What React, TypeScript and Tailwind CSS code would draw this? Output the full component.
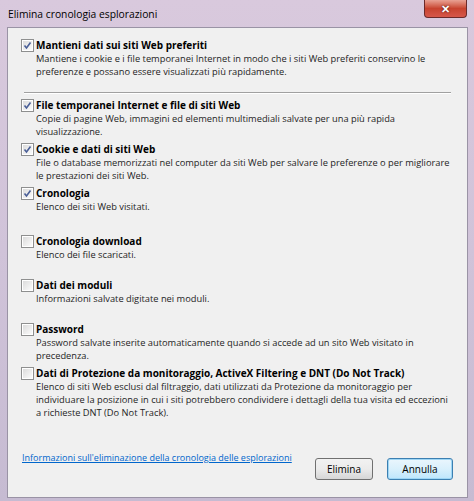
import React from 'react';

interface Item {
  title: string;
  desc: string[];
  checked: boolean;
  extra?: string;
}

const items: Item[] = [
  {
    title: 'File temporanei Internet e file di siti Web',
    desc: ['Copie di pagine Web, immagini ed elementi multimediali salvate per una più rapida', 'visualizzazione.'],
    checked: true,
  },
  {
    title: 'Cookie e dati di siti Web',
    desc: ['File o database memorizzati nel computer da siti Web per salvare le preferenze o per migliorare', 'le prestazioni dei siti Web.'],
    checked: true,
  },
  {
    title: 'Cronologia',
    desc: ['Elenco dei siti Web visitati.'],
    checked: true,
    extra: 'h-[48px]',
  },
  { title: 'Cronologia download', desc: ['Elenco dei file scaricati.'], checked: false },
  { title: 'Dati dei moduli', desc: ['Informazioni salvate digitate nei moduli.'], checked: false },
  {
    title: 'Password',
    desc: ['Password salvate inserite automaticamente quando si accede ad un sito Web visitato in', 'precedenza.'],
    checked: false,
  },
  {
    title: 'Dati di Protezione da monitoraggio, ActiveX Filtering e DNT (Do Not Track)',
    desc: [
      'Elenco di siti Web esclusi dal filtraggio, dati utilizzati da Protezione da monitoraggio per',
      'individuare la posizione in cui i siti potrebbero condividere i dettagli della tua visita ed eccezioni',
      'a richieste DNT (Do Not Track).',
    ],
    checked: false,
  },
];

function Check({ checked }: { checked: boolean }) {
  return (
    <div className="w-[13px] h-[13px] shrink-0 border border-[#8e8f8f] bg-white p-px">
      <div className="w-full h-full bg-gradient-to-br from-[#dcdcdc] to-[#fbfbfb] flex items-center justify-center">
        {checked && (
          <svg width="9" height="9" viewBox="0 0 9 9">
            <path d="M1.5 4.5 L3.5 7 L7.5 1.5" stroke="#4a5f97" strokeWidth="1.6" fill="none" />
          </svg>
        )}
      </div>
    </div>
  );
}

function Row({ item }: { item: Item }) {
  return (
    <div className={`flex gap-[2px] ${item.extra ?? 'h-[44px]'}`}>
      <div className="pt-[1px]">
        <Check checked={item.checked} />
      </div>
      <div>
        <div className="font-bold text-[10px] leading-[14px] text-black whitespace-nowrap">{item.title}</div>
        {item.desc.map((d, i) => (
          <div key={i} className="text-[9.3px] leading-[13px] text-[#1e1e1e] whitespace-nowrap">{d}</div>
        ))}
      </div>
    </div>
  );
}

export default function App() {
  return (
    <div
      className="w-[474px] h-[501px] bg-gradient-to-b from-[#d9c9dd] via-[#d0c3d9] to-[#c6bbd2] relative overflow-hidden"
      style={{ fontFamily: '"Open Sans", "Noto Sans", sans-serif' }}
    >
      <div className="absolute right-[7px] top-0 w-[43px] h-[18px] rounded-b-[4px] border border-t-0 border-[#6b2a2a] bg-gradient-to-b from-[#e8a193] via-[#c7432f] to-[#d6574a] flex items-center justify-center">
        <span className="text-white font-bold text-[11px] leading-none" style={{ textShadow: '0 0 2px #3a0000' }}>✕</span>
      </div>
      <div className="h-[27px] pl-[8px] pt-[6px] text-[10.3px] leading-[16px] text-black">Elimina cronologia esplorazioni</div>
      <div className="absolute left-[7px] top-[27px] w-[461px] h-[471px] border border-[#9a93a5] bg-[#f0f0f0] px-[13px] pt-[10px]">
        <div className="flex gap-[2px] h-[54px]">
          <div className="pt-[1px]">
            <Check checked />
          </div>
          <div>
            <div className="font-bold text-[10px] leading-[14px] text-black">Mantieni dati sui siti Web preferiti</div>
            <div className="text-[9.3px] leading-[13px] text-[#1e1e1e] whitespace-nowrap">
              Mantiene i cookie e i file temporanei Internet in modo che i siti Web preferiti conservino le
            </div>
            <div className="text-[9.3px] leading-[13px] text-[#1e1e1e]">
              preferenze e possano essere visualizzati più rapidamente.
            </div>
          </div>
        </div>
        <div className="ml-[3px] mr-[3px] border-t border-[#a0a0a0] border-b border-b-white mb-[4px]" />
        {items.map((it) => (
          <Row key={it.title} item={it} />
        ))}
        <div className="flex items-start mt-[43px]">
          <a className="text-[9px] leading-[13px] text-[#0066cc] underline flex-1 ml-[1px] mt-[-2px]">
            Informazioni sull'eliminazione della cronologia delle esplorazioni
          </a>
          <button className="w-[58px] h-[22px] rounded-[3px] border border-[#707070] bg-gradient-to-b from-[#f2f2f2] via-[#ebebeb] to-[#d6d6d6] text-[10px] text-black mr-[14px] mt-[5px]">
            Elimina
          </button>
          <button className="w-[66px] h-[22px] rounded-[3px] border border-[#3c7fb1] bg-gradient-to-b from-[#eaf6fd] via-[#d9f0fc] to-[#bee6fd] text-[10px] text-black shadow-[inset_0_0_0_1px_#9ed6f5] mr-[1px] mt-[5px]">
            Annulla
          </button>
        </div>
      </div>
    </div>
  );
}
